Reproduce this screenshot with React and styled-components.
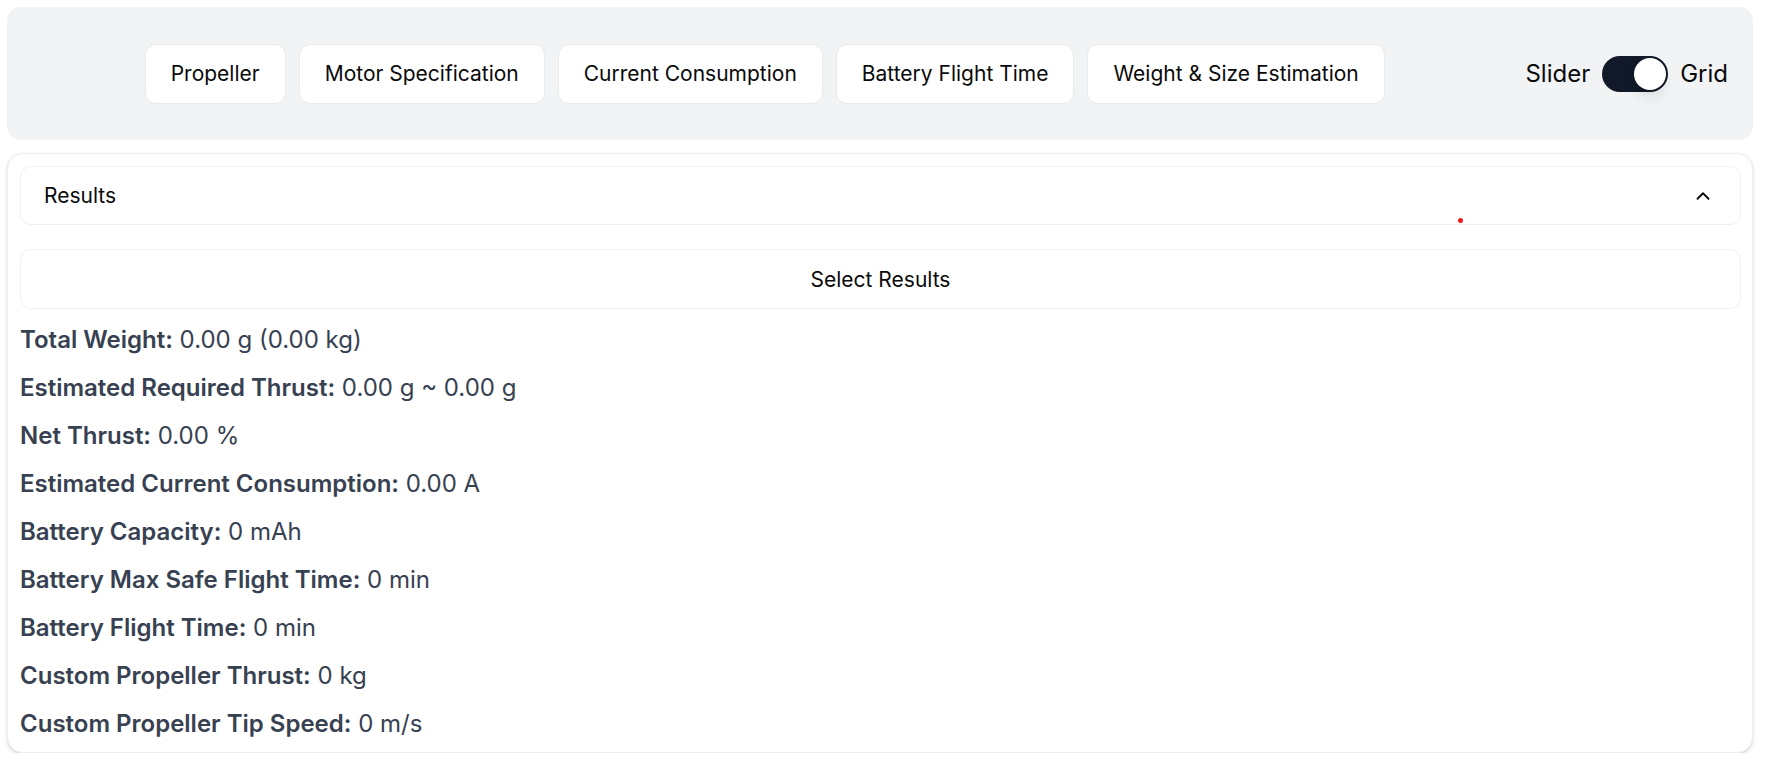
import React, { useState } from "react";
import styled, { createGlobalStyle } from "styled-components";
import { ChevronUp } from "lucide-react";

const GlobalStyle = createGlobalStyle`
  body {
    margin: 0;
    background: #ffffff;
    font-family: Inter, "Noto Sans", sans-serif;
    color: #0a0a0a;
  }
`;

const Page = styled.div`
  padding: 7px 14px 0 7px;
  display: flex;
  flex-direction: column;
  gap: 13px;
`;

const TopBar = styled.div`
  display: flex;
  align-items: center;
  height: 133px;
  padding: 0 25px;
  gap: 28px;
  background: #f2f3f5;
  border-radius: 14px;
  box-sizing: border-box;
`;

const TabGroup = styled.div`
  flex: 1;
  display: flex;
  justify-content: center;
  gap: 13px;
`;

const TabButton = styled.button`
  height: 60px;
  padding: 0 25px;
  background: #ffffff;
  border: 1px solid #e8eaee;
  border-radius: 11px;
  font-family: Inter, sans-serif;
  font-size: 21px;
  color: #0a0a0a;
  cursor: pointer;
`;

const ModeSwitch = styled.div`
  display: flex;
  align-items: center;
  gap: 12px;
  font-size: 24px;
`;

const Track = styled.button`
  position: relative;
  width: 66px;
  height: 36px;
  padding: 0;
  border: 2px solid #111827;
  border-radius: 18px;
  background: ${(p) => (p.$on ? "#111827" : "#e5e7eb")};
  cursor: pointer;
`;

const Thumb = styled.span`
  position: absolute;
  top: 0;
  left: ${(p) => (p.$on ? "30px" : "0")};
  width: 32px;
  height: 32px;
  border-radius: 50%;
  background: #ffffff;
  box-shadow: 0 10px 15px -3px rgba(0, 0, 0, 0.1), 0 4px 6px -4px rgba(0, 0, 0, 0.1);
`;

const Card = styled.div`
  position: relative;
  border: 1px solid #eceef1;
  border-radius: 16px;
  padding: 12px 11px 10px 12px;
  background: #ffffff;
  box-shadow: 0 2px 4px rgba(0, 0, 0, 0.12), 0 1px 2px rgba(0, 0, 0, 0.06);
`;

const SectionHeader = styled.div`
  display: flex;
  align-items: center;
  justify-content: space-between;
  height: 59px;
  padding: 0 26px 0 23px;
  border: 1px solid #eef0f4;
  border-radius: 11px;
  font-size: 21px;
  box-sizing: border-box;
`;

const SelectBox = styled.div`
  display: flex;
  align-items: center;
  justify-content: center;
  height: 60px;
  margin-top: 24px;
  border: 1px solid #eef0f4;
  border-radius: 11px;
  font-size: 21px;
  box-sizing: border-box;
`;

const ResultList = styled.div`
  margin-top: 12px;
  display: flex;
  flex-direction: column;
  gap: 11px;
`;

const ResultLine = styled.div`
  font-size: 24px;
  line-height: 37px;
  color: #374151;
`;

const Label = styled.span`
  font-weight: 600;
`;

const Marker = styled.span`
  position: absolute;
  left: 1450px;
  top: 64px;
  width: 5px;
  height: 5px;
  border-radius: 50%;
  background: #f01818;
`;

const tabs = [
  "Propeller",
  "Motor Specification",
  "Current Consumption",
  "Battery Flight Time",
  "Weight & Size Estimation",
];

const results = [
  ["Total Weight:", "0.00 g (0.00 kg)"],
  ["Estimated Required Thrust:", "0.00 g ~ 0.00 g"],
  ["Net Thrust:", "0.00 %"],
  ["Estimated Current Consumption:", "0.00 A"],
  ["Battery Capacity:", "0 mAh"],
  ["Battery Max Safe Flight Time:", "0 min"],
  ["Battery Flight Time:", "0 min"],
  ["Custom Propeller Thrust:", "0 kg"],
  ["Custom Propeller Tip Speed:", "0 m/s"],
];

export default function App() {
  const [grid, setGrid] = useState(true);

  return (
    <>
      <GlobalStyle />
      <Page>
        <TopBar>
          <TabGroup>
            {tabs.map((t) => (
              <TabButton key={t}>{t}</TabButton>
            ))}
          </TabGroup>
          <ModeSwitch>
            <span>Slider</span>
            <Track $on={grid} onClick={() => setGrid(!grid)}>
              <Thumb $on={grid} />
            </Track>
            <span>Grid</span>
          </ModeSwitch>
        </TopBar>

        <Card>
          <SectionHeader>
            <span>Results</span>
            <ChevronUp size={22} strokeWidth={2} color="#0a0a0a" />
          </SectionHeader>
          <Marker />
          <SelectBox>Select Results</SelectBox>
          <ResultList>
            {results.map(([label, value]) => (
              <ResultLine key={label}>
                <Label>{label}</Label> {value}
              </ResultLine>
            ))}
          </ResultList>
        </Card>
      </Page>
    </>
  );
}
